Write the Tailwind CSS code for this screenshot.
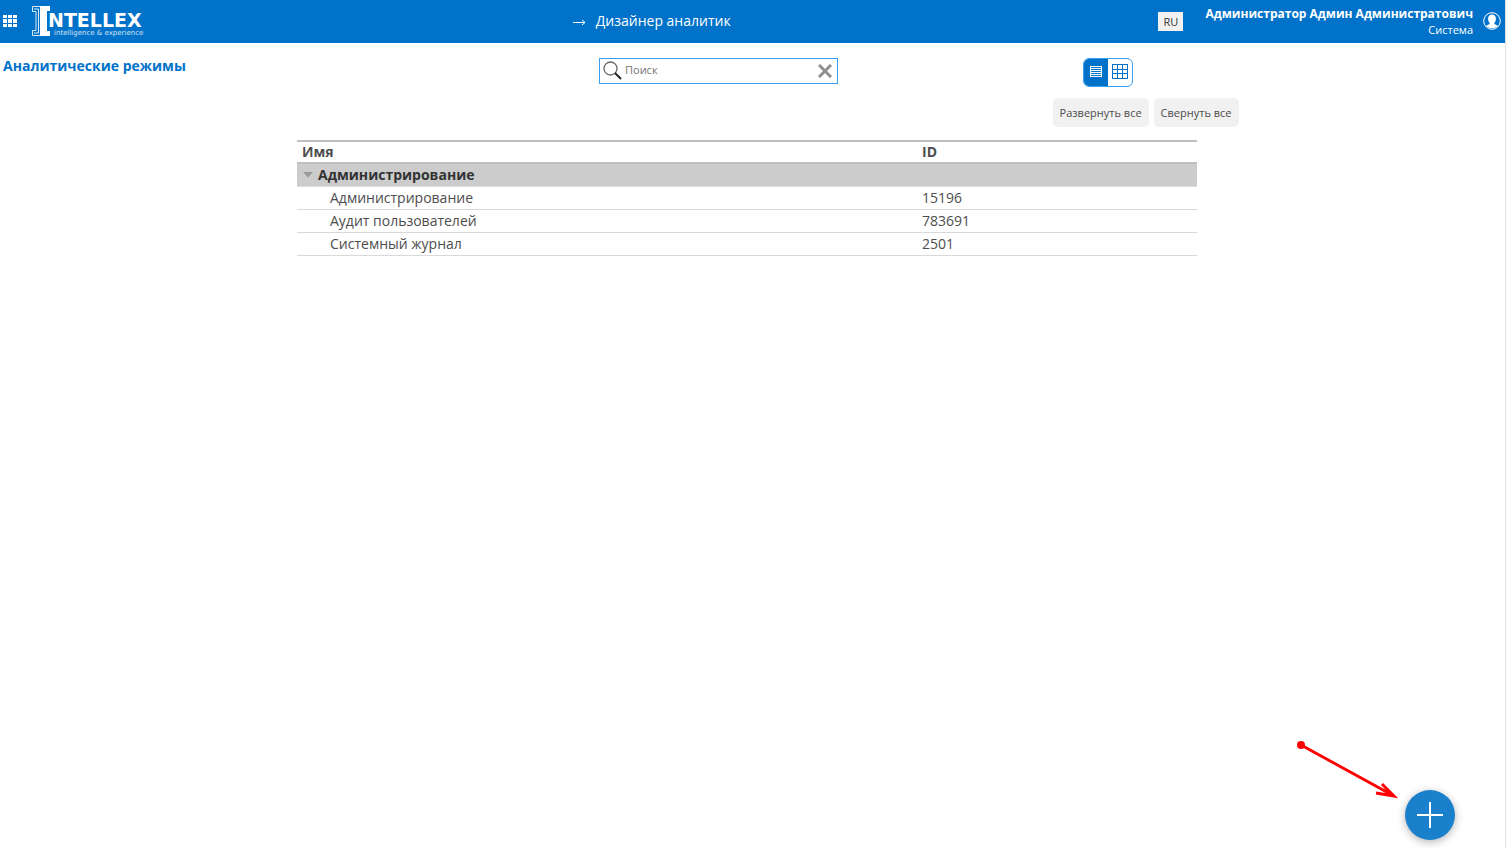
<!DOCTYPE html>
<html lang="ru">
<head>
<meta charset="utf-8">
<meta name="viewport" content="width=device-width, initial-scale=1">
<title>Дизайнер аналитик</title>
<script src="https://cdn.jsdelivr.net/npm/@tailwindcss/browser@4"></script>
</head>
<body class="flex min-h-screen flex-col bg-white font-['Open_Sans',sans-serif] text-[#4d4d4d]">
<header class="grid h-[43px] grid-cols-[570fr_auto_772fr] items-center border-r border-[#e0e0e0] bg-[#0072c9] pb-[2px] text-white">
  <div class="flex items-center gap-[14px] pl-[3px]">
    <button type="button" aria-label="Меню">
      <svg class="block" width="14" height="12" viewBox="0 0 14 12" fill="#fff" shape-rendering="crispEdges"><path d="M0 0h4v3H0zM5 0h4v3H5zM10 0h4v3h-4zM0 4h4v4H0zM5 4h4v4H5zM10 4h4v4h-4zM0 9h4v3H0zM5 9h4v3H5zM10 9h4v3h-4z"/></svg>
    </button>
    <a href="#" aria-label="Intellex">
      <svg class="block overflow-visible" width="116" height="32" viewBox="0 0 116 32" fill="#fff">
        <path d="M9 1h10v5h-3v20h3v5H9z"/>
        <path d="M9 1.500H1.500v5H5v19H1.500v5H9M3 4h4.500v24H3" fill="none" stroke="#fff" stroke-opacity=".85"/>
        <text x="17" y="22" font-family="DejaVu Sans, sans-serif" font-size="19" font-weight="700">NTELLEX</text>
        <text x="23" y="30" font-family="DejaVu Sans, sans-serif" font-size="7" opacity=".8">intelligence &amp; experience</text>
      </svg>
    </a>
  </div>
  <div class="flex items-center gap-[10px] text-sm">
    <svg class="mt-[2px]" width="14" height="8" viewBox="0 0 14 8" fill="none" stroke="#fff"><path d="M1 4.500h12M10 2l3 2.500L10 7"/></svg>
    <h1>Дизайнер аналитик</h1>
  </div>
  <div class="flex items-center justify-end pr-1">
    <button type="button" class="mt-px mr-[22px] h-[19px] w-[25px] bg-[#f1f1f1] text-[11px] leading-[19px] text-[#333]">RU</button>
    <div class="mr-[10px] pt-[2px] text-right text-[11px] leading-4">
      <div class="text-xs leading-4 font-bold">Администратор Админ Администратович</div>
      <div>Система</div>
    </div>
    <button type="button" aria-label="Профиль">
      <svg class="block" width="18" height="18" viewBox="0 0 18 18"><circle cx="9" cy="9" r="8.300" fill="none" stroke="#fff"/><path d="M9 2.500c2.700 0 4 1.800 3.900 4.500 0 1.600-.700 2.900-1.500 3.700v1.300l3.600 1.800A8.300 8.300 0 0 1 3 13.800L6.600 12v-1.300C5.800 9.900 5.100 8.600 5.100 7 5 4.300 6.300 2.500 9 2.500z" fill="#fff"/></svg>
    </button>
  </div>
</header>
<main class="flex-1 border-r border-[#e0e0e0]">
  <div class="grid grid-cols-[599fr_239px_245fr_50px_372fr] pt-[15px]">
    <h2 class="pl-[3px] text-sm leading-4 font-bold text-[#0072c9]">Аналитические режимы</h2>
    <div class="flex h-[26px] items-center border border-[#3a9ff2] pr-[5px] pl-[3px]">
      <svg width="20" height="20" viewBox="0 0 20 20" fill="none"><circle cx="7.500" cy="7.500" r="6.500" stroke="#666" stroke-width="1.300"/><path d="M12 12l6 6" stroke="#222" stroke-width="2"/></svg>
      <input type="text" aria-label="Поиск" placeholder="Поиск" class="ml-[2px] w-0 flex-1 pb-[2px] text-[11px] outline-none placeholder:text-[#757575]">
      <button type="button" aria-label="Очистить"><svg class="block" width="14" height="14" viewBox="0 0 14 14" stroke="#8f8f8f" stroke-width="3"><path d="M1 1l12 12M13 1L1 13"/></svg></button>
    </div>
    <div></div>
    <div class="flex h-[29px] overflow-hidden rounded-[6px] border border-[#3a9ff2]">
      <button type="button" aria-label="Список" class="flex w-6 items-center justify-center bg-[#0072c9] pb-[2px]"><svg width="12" height="11" viewBox="0 0 12 11" shape-rendering="crispEdges"><path fill="#fff" d="M0 0h12v11H0z"/><path d="M1 1.500h10M1 3.500h10M1 5.500h10M1 7.500h10M1 9.500h10" stroke="#0072c9"/></svg></button>
      <button type="button" aria-label="Плитка" class="flex w-6 items-center justify-center pb-[2px]"><svg width="16" height="15" viewBox="0 0 16 15" fill="none" stroke="#0072c9" shape-rendering="crispEdges"><path d="M.5.5h15v14H.5zM5.500 0v15M10.500 0v15M0 5.500h16M0 9.500h16"/></svg></button>
    </div>
    <div></div>
  </div>
  <div class="mx-auto mt-[11px] flex w-[972px] max-w-full justify-end gap-[5px]">
    <button type="button" class="h-[29px] rounded-[5px] bg-[#f1f1f1] px-[7px] pt-[2px] text-[11px]">Развернуть все</button>
    <button type="button" class="h-[29px] rounded-[5px] bg-[#f1f1f1] px-[7px] pt-[2px] text-[11px]">Свернуть все</button>
  </div>
  <div class="pr-[11px]">
  <table class="mx-auto mt-[13px] w-[900px] max-w-full table-fixed border-separate border-spacing-0 text-left text-sm leading-[22px]">
    <thead><tr>
      <th class="w-[620px] border-y-2 border-[#bfbfbf] pl-[5px] leading-5 font-bold">Имя</th>
      <th class="border-y-2 border-[#bfbfbf] pl-[5px] leading-5 font-bold">ID</th>
    </tr></thead>
    <tbody>
      <tr class="bg-[#cccccc] text-[#333]"><td colspan="2" class="border-b border-[#ddd] pl-[6px] font-bold"><button type="button" class="flex items-center gap-[5px]"><svg width="10" height="6" viewBox="0 0 10 6" fill="#999"><path d="M0 0h10L5 5.500z"/></svg>Администрирование</button></td></tr>
      <tr><td class="border-b border-[#d9d9d9] pl-[33px]">Администрирование</td><td class="border-b border-[#d9d9d9] pl-[5px]">15196</td></tr>
      <tr><td class="border-b border-[#d9d9d9] pl-[33px]">Аудит пользователей</td><td class="border-b border-[#d9d9d9] pl-[5px]">783691</td></tr>
      <tr><td class="border-b border-[#d9d9d9] pl-[33px]">Системный журнал</td><td class="border-b border-[#d9d9d9] pl-[5px]">2501</td></tr>
    </tbody>
  </table>
  </div>
</main>
<svg class="pointer-events-none fixed right-[108px] bottom-[48px]" width="102" height="62" viewBox="0 0 102 62" fill="none" stroke="#f00" stroke-width="3" aria-hidden="true"><circle cx="5" cy="7" r="4" fill="#f00" stroke="none"/><path d="M5 7l93 51M86 46l12 12-18-3"/></svg>
<button type="button" aria-label="Добавить" class="fixed right-[51px] bottom-2 flex size-[50px] items-center justify-center rounded-full bg-[#1a80cc] shadow-[0_2px_8px_rgba(0,0,0,0.3)]"><svg width="26" height="26" viewBox="0 0 26 26" stroke="#fff" stroke-width="2"><path d="M0 13h26M13 0v26"/></svg></button>
</body>
</html>
